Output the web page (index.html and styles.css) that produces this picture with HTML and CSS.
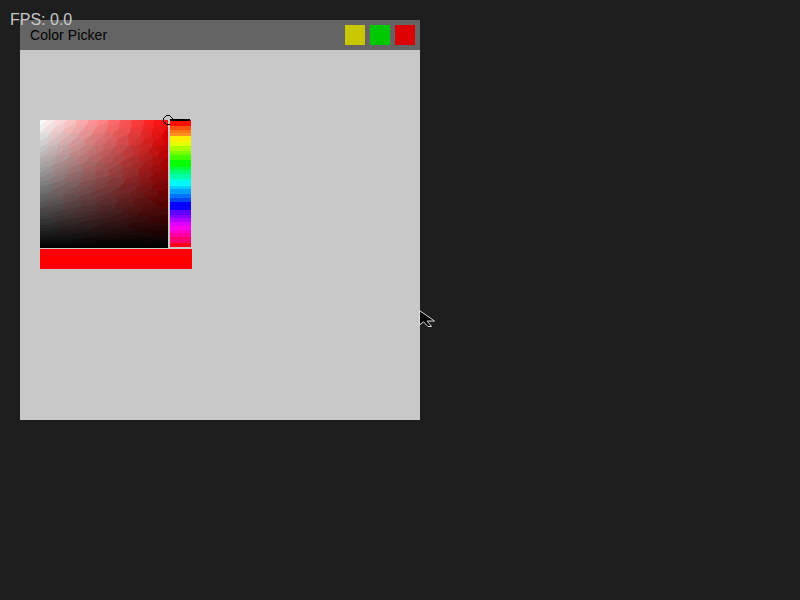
FILE: index.html
```
<!DOCTYPE html>
<html lang="en">
<head>
<meta charset="utf-8">
<title>Color Picker</title>
<link rel="stylesheet" href="styles.css">
</head>
<body>
<main class="window">
  <header class="titlebar">
    <span class="title">Color Picker</span>
    <div class="controls">
      <span class="control minimize"></span>
      <span class="control maximize"></span>
      <span class="control close"></span>
    </div>
  </header>
  <section class="picker">
    <div class="selectors">
      <div class="shade">
        <canvas class="shade-map" width="128" height="128"></canvas>
        <svg class="ring" width="10" height="10" viewBox="0 0 10 10" shape-rendering="crispEdges"><path d="M3 0h4v1h-4zM3 9h4v1h-4zM0 3h1v4h-1zM9 3h1v4h-1zM1 2h1v1h-1zM2 1h1v1h-1zM7 1h1v1h-1zM8 2h1v1h-1zM1 7h1v1h-1zM2 8h1v1h-1zM7 8h1v1h-1zM8 7h1v1h-1z"/></svg>
      </div>
      <div class="hue"><span class="hue-marker"></span></div>
    </div>
    <div class="preview"></div>
  </section>
</main>
<div class="fps">FPS: 0.0</div>
<svg class="cursor" width="18" height="20" viewBox="0 0 18 20"><path d="M1.5 1.5V16L5.5 12.8L10 17.5H13.5L9.2 12H16.5Z" fill="#000" stroke="#ddd" stroke-width="1"/></svg>
<script src="picker.js"></script>
</body>
</html>
```
FILE: styles.css
```
body {
  margin: 0;
  height: 600px;
  position: relative;
  overflow: hidden;
  display: flow-root;
  background: #1e1e1e;
  font-family: "Liberation Sans", Arial, sans-serif;
}
.window {
  width: 400px;
  height: 400px;
  margin: 20px;
  background: #c8c8c8;
}
.titlebar {
  height: 30px;
  box-sizing: border-box;
  padding: 0 5px 0 10px;
  display: flex;
  align-items: center;
  justify-content: space-between;
  background: #646464;
}
.title {
  font-size: 14px;
  line-height: 16px;
  letter-spacing: 0.08px;
  color: #000;
}
.controls {
  display: flex;
  gap: 5px;
}
.control {
  width: 20px;
  height: 20px;
}
.minimize { background: #c8c800; }
.maximize { background: #00c800; }
.close { background: #dc0000; }
.picker {
  width: 152px;
  padding: 70px 0 0 20px;
}
.selectors {
  display: flex;
  gap: 2px;
}
.shade {
  position: relative;
  width: 128px;
  height: 128px;
}
.shade-map {
  display: block;
  background: linear-gradient(to top, #000, transparent), linear-gradient(to right, #fff, #f00);
}
.ring {
  position: absolute;
  left: 123px;
  top: -5px;
}
.hue {
  position: relative;
  width: 21px;
  height: 127px;
  background: linear-gradient(to bottom,
    #ff1000 0 6px, #ff5010 6px 10px, #ff7818 10px 13px, #ff9020 13px 16px,
    #ffee00 16px 22px, #e4ff00 22px 26px, #a8ff00 26px 31px, #78ff00 31px 35px,
    #40ff00 35px 40px, #08ff00 40px 47px, #00ff40 47px 50px, #00ff70 50px 54px,
    #00ffa8 54px 59px, #00ffe8 59px 62px, #00f8ff 62px 66px, #00d0ff 66px 69px,
    #00a0ff 69px 74px, #0074ff 74px 78px, #0048ee 78px 82px, #0800ff 82px 90px,
    #6000ff 90px 95px, #8400ff 95px 98px, #b000ff 98px 102px, #e000ff 102px 106px,
    #ff00ee 106px 110px, #ff00d0 110px 113px, #ff00a0 113px 117px, #ff0070 117px 123px,
    #ff0018 123px 127px);
}
.hue-marker {
  position: absolute;
  left: 0;
  top: -1px;
  width: 20px;
  height: 2px;
  background: #000;
}
.preview {
  width: 152px;
  height: 20px;
  margin-top: 1px;
  background: #f00;
}
.fps {
  position: absolute;
  left: 10px;
  top: 11px;
  font-size: 16px;
  line-height: 18px;
  color: #c8c8c8;
}
.cursor {
  position: absolute;
  left: 418px;
  top: 309px;
}
```
FILE: picker.js
```
// Paints the saturation/value square with a reduced palette of red shades.
const canvas = document.querySelector('.shade-map');
const ctx = canvas.getContext('2d');
const size = 128;
let seed = 7;
function random() {
  seed = (seed * 16807) % 2147483647;
  return seed / 2147483647;
}

// Palette steps shrink towards black so the dark rows stay smooth.
const palette = [];
for (let r = 0; r <= 256; r += 4 + r * 0.04) {
  const step = 8 + r * 0.055;
  for (let g = random() * step; g <= r + step / 2; g += step) {
    const red = Math.min(253, Math.max(0, r + (random() - 0.5) * step * 0.5));
    const other = Math.min(red, Math.max(0, g + (random() - 0.5) * step * 0.5));
    palette.push([red, other]);
  }
}

const image = ctx.createImageData(size, size);
for (let y = 0; y < size; y++) {
  for (let x = 0; x < size; x++) {
    const red = 255 * (1 - y / (size - 1));
    const other = red * (1 - x / (size - 1));
    let best = palette[0];
    let distance = Infinity;
    for (const shade of palette) {
      const d = (shade[0] - red) ** 2 + (shade[1] - other) ** 2;
      if (d < distance) {
        distance = d;
        best = shade;
      }
    }
    const r = best[0] * 0.8 + red * 0.2;
    const g = best[1] * 0.8 + other * 0.2;
    image.data.set([r, g, g, 255], (y * size + x) * 4);
  }
}
ctx.putImageData(image, 0, 0);
```
